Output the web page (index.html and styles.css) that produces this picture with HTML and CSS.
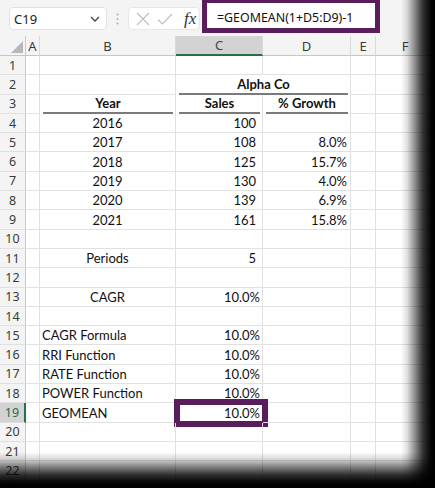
FILE: index.html
```html
<!DOCTYPE html>
<html>
<head>
<meta charset="utf-8">
<link rel="stylesheet" href="styles.css">
</head>
<body>
<div class="screen">
  <div class="toolbar">
    <div class="namebox">
      <span class="name">C19</span>
      <svg class="chev" width="10" height="6" viewBox="0 0 10 6"><path d="M1 1 L5 5 L9 1" fill="none" stroke="#444" stroke-width="1.3"/></svg>
    </div>
    <div class="dots">
      <svg width="3" height="12" viewBox="0 0 3 12"><circle cx="1.5" cy="1.5" r="1" fill="#b0b0b0"/><circle cx="1.5" cy="6" r="1" fill="#b0b0b0"/><circle cx="1.5" cy="10.5" r="1" fill="#b0b0b0"/></svg>
    </div>
    <div class="fxbox">
      <svg class="ico" width="14" height="14" viewBox="0 0 14 14"><path d="M1 1 L13 13 M13 1 L1 13" fill="none" stroke="#bfbfbf" stroke-width="1.2"/></svg>
      <svg class="ico" width="16" height="14" viewBox="0 0 16 14"><path d="M1 7.5 L5.5 12 L15 2" fill="none" stroke="#bfbfbf" stroke-width="1.2"/></svg>
      <span class="fx">fx</span>
    </div>
    <div class="formula">=GEOMEAN(1+D5:D9)-1</div>
  </div>

  <div class="sheet">
    <div class="row hdr">
      <div class="corner"><span class="tri"></span></div>
      <div class="ch">A</div><div class="ch">B</div><div class="ch sel">C</div><div class="ch">D</div><div class="ch">E</div><div class="ch">F</div>
    </div>
    <div class="row"><div class="rh">1</div><div class="c"></div><div class="c"></div><div class="c"></div><div class="c"></div><div class="c"></div><div class="c"></div></div>
    <div class="row"><div class="rh">2</div><div class="c"></div><div class="c"></div><div class="c span2 ul"><span class="u">Alpha Co</span></div><div class="c"></div><div class="c"></div></div>
    <div class="row"><div class="rh">3</div><div class="c"></div><div class="c ul"><span class="u">Year</span></div><div class="c ul"><span class="u">Sales</span></div><div class="c ul"><span class="u">% Growth</span></div><div class="c"></div><div class="c"></div></div>
    <div class="row"><div class="rh">4</div><div class="c"></div><div class="c ctr">2016</div><div class="c num">100</div><div class="c"></div><div class="c"></div><div class="c"></div></div>
    <div class="row"><div class="rh">5</div><div class="c"></div><div class="c ctr">2017</div><div class="c num">108</div><div class="c pctd">8.0%</div><div class="c"></div><div class="c"></div></div>
    <div class="row"><div class="rh">6</div><div class="c"></div><div class="c ctr">2018</div><div class="c num">125</div><div class="c pctd">15.7%</div><div class="c"></div><div class="c"></div></div>
    <div class="row"><div class="rh">7</div><div class="c"></div><div class="c ctr">2019</div><div class="c num">130</div><div class="c pctd">4.0%</div><div class="c"></div><div class="c"></div></div>
    <div class="row"><div class="rh">8</div><div class="c"></div><div class="c ctr">2020</div><div class="c num">139</div><div class="c pctd">6.9%</div><div class="c"></div><div class="c"></div></div>
    <div class="row"><div class="rh">9</div><div class="c"></div><div class="c ctr">2021</div><div class="c num">161</div><div class="c pctd">15.8%</div><div class="c"></div><div class="c"></div></div>
    <div class="row"><div class="rh">10</div><div class="c"></div><div class="c"></div><div class="c"></div><div class="c"></div><div class="c"></div><div class="c"></div></div>
    <div class="row"><div class="rh">11</div><div class="c"></div><div class="c ctr">Periods</div><div class="c num">5</div><div class="c"></div><div class="c"></div><div class="c"></div></div>
    <div class="row"><div class="rh">12</div><div class="c"></div><div class="c"></div><div class="c"></div><div class="c"></div><div class="c"></div><div class="c"></div></div>
    <div class="row"><div class="rh">13</div><div class="c"></div><div class="c ctr">CAGR</div><div class="c pct">10.0%</div><div class="c"></div><div class="c"></div><div class="c"></div></div>
    <div class="row"><div class="rh">14</div><div class="c"></div><div class="c"></div><div class="c"></div><div class="c"></div><div class="c"></div><div class="c"></div></div>
    <div class="row"><div class="rh">15</div><div class="c"></div><div class="c">CAGR Formula</div><div class="c pct">10.0%</div><div class="c"></div><div class="c"></div><div class="c"></div></div>
    <div class="row"><div class="rh">16</div><div class="c"></div><div class="c">RRI Function</div><div class="c pct">10.0%</div><div class="c"></div><div class="c"></div><div class="c"></div></div>
    <div class="row"><div class="rh">17</div><div class="c"></div><div class="c">RATE Function</div><div class="c pct">10.0%</div><div class="c"></div><div class="c"></div><div class="c"></div></div>
    <div class="row"><div class="rh">18</div><div class="c"></div><div class="c">POWER Function</div><div class="c pct">10.0%</div><div class="c"></div><div class="c"></div><div class="c"></div></div>
    <div class="row"><div class="rh rsel">19</div><div class="c"></div><div class="c">GEOMEAN</div><div class="c pct active">10.0%</div><div class="c"></div><div class="c"></div><div class="c"></div></div>
    <div class="row"><div class="rh">20</div><div class="c"></div><div class="c"></div><div class="c"></div><div class="c"></div><div class="c"></div><div class="c"></div></div>
    <div class="row"><div class="rh">21</div><div class="c"></div><div class="c"></div><div class="c"></div><div class="c"></div><div class="c"></div><div class="c"></div></div>
    <div class="row"><div class="rh">22</div><div class="c"></div><div class="c"></div><div class="c"></div><div class="c"></div><div class="c"></div><div class="c"></div></div>
    <div class="row"><div class="rh">23</div><div class="c"></div><div class="c"></div><div class="c"></div><div class="c"></div><div class="c"></div><div class="c"></div></div>
  </div>

  <div class="shade"></div>
</div>
</body>
</html>
```

FILE: styles.css
```css
html, body {
  margin: 0;
  padding: 0;
  background: #ffffff;
}

.screen {
  position: relative;
  width: 435px;
  height: 488px;
  overflow: hidden;
  background: #ffffff;
  font-family: Lato, "Noto Sans", sans-serif;
}

/* ---------- formula bar ---------- */
.toolbar {
  display: flex;
  align-items: flex-start;
  height: 36px;
  background: #f4f4f4;
  box-sizing: border-box;
}

.namebox {
  display: flex;
  align-items: center;
  justify-content: space-between;
  box-sizing: border-box;
  width: 98px;
  height: 23px;
  margin: 7px 0 0 9px;
  padding: 0 6px 0 4px;
  background: #ffffff;
  border: 1px solid #e2e2e2;
  border-radius: 4px;
}

.name {
  font-family: "Noto Sans", sans-serif;
  font-size: 13px;
  color: #222;
}

.chev {
  display: block;
}

.dots {
  width: 21px;
  height: 23px;
  margin-top: 7px;
  display: flex;
  align-items: center;
  justify-content: center;
}

.dots svg {
  display: block;
}

.fxbox {
  display: flex;
  align-items: center;
  box-sizing: border-box;
  width: 72px;
  height: 23px;
  margin-top: 7px;
  padding-left: 7px;
  gap: 7px;
  background: #ffffff;
  border: 1px solid #e6e6e6;
  border-radius: 4px;
}

.ico {
  display: block;
}

.fx {
  font-family: "Liberation Serif", serif;
  font-style: italic;
  font-size: 17px;
  color: #333;
  margin-left: 4px;
  line-height: 20px;
}

.formula {
  box-sizing: border-box;
  width: 178px;
  height: 35px;
  margin: -2px 0 0 2px;
  padding: 6px 0 0 10px;
  border: 5px solid #5a1d5b;
  background: #ffffff;
  font-family: "Noto Sans", sans-serif;
  font-size: 12.4px;
  line-height: 18px;
  color: #111;
}

/* ---------- sheet ---------- */
.sheet {
  display: flex;
  flex-direction: column;
}

.row {
  display: grid;
  grid-template-columns: 26px 14px 136px 87px 88px 25px 1fr;
  height: 19.3px;
}

.row.hdr {
  height: 20px;
}

.corner {
  display: flex;
  align-items: flex-end;
  justify-content: flex-end;
  padding: 0 2px 2px 0;
  background: #f4f4f4;
  border-right: 1px solid #c9c9c9;
  border-bottom: 1px solid #c6c6c6;
}

.tri {
  width: 12px;
  height: 12px;
  background: #b8b8b8;
  clip-path: polygon(100% 0, 100% 100%, 0 100%);
}

.ch {
  display: flex;
  align-items: center;
  justify-content: center;
  background: #f4f4f4;
  border-right: 1px solid #dadada;
  border-bottom: 1px solid #c6c6c6;
  font-family: "Noto Sans", sans-serif;
  font-size: 13px;
  color: #3a3a3a;
}

.ch.sel {
  background: #d3d3d3;
  border-bottom: 2px solid #217346;
  color: #444;
}

.rh {
  display: flex;
  align-items: center;
  justify-content: center;
  background: #f4f4f4;
  border-right: 1px solid #c9c9c9;
  border-bottom: 1px solid #e0e0e0;
  font-family: "Noto Sans", sans-serif;
  font-size: 12.5px;
  color: #3a3a3a;
}

.rh.rsel {
  background: #d3d3d3;
  border-right: 2px solid #217346;
  color: #2b6a45;
}

.c {
  position: relative;
  display: flex;
  align-items: flex-end;
  box-sizing: border-box;
  padding: 0 2px 0 2px;
  border-right: 1px solid #e1e1e1;
  border-bottom: 1px solid #e1e1e1;
  font-size: 13px;
  line-height: 17px;
  color: #111;
  white-space: nowrap;
}

.ctr {
  justify-content: center;
}

.num {
  justify-content: flex-end;
  padding-right: 6px;
}

.pct {
  justify-content: flex-end;
  padding-right: 2px;
}

.pctd {
  justify-content: flex-end;
  padding-right: 3px;
}

.span2 {
  grid-column: span 2;
}

.ul {
  padding: 0 2px 0 3px;
  border-bottom: none;
}

.u {
  display: block;
  width: 100%;
  text-align: center;
  font-weight: 700;
  border-bottom: 2px solid #7a7a7a;
}

.active::after {
  content: "";
  position: absolute;
  left: -2px;
  right: -6px;
  top: -4px;
  bottom: -5px;
  border: 6px solid #5a1d5b;
}

/* ---------- photo edge shadow ---------- */
.shade {
  position: absolute;
  left: 0;
  top: 0;
  width: 435px;
  height: 488px;
  pointer-events: none;
  background:
    linear-gradient(to right,
      rgba(0,0,0,0) 401px,
      rgba(0,0,0,0.12) 407px,
      rgba(0,0,0,0.45) 415px,
      rgba(0,0,0,0.8) 423px,
      rgba(0,0,0,0.96) 430px,
      #000 434px),
    linear-gradient(to bottom,
      rgba(0,0,0,0) 452px,
      rgba(0,0,0,0.15) 459px,
      rgba(0,0,0,0.5) 467px,
      rgba(0,0,0,0.82) 475px,
      rgba(0,0,0,0.97) 482px,
      #000 486px);
}
```
